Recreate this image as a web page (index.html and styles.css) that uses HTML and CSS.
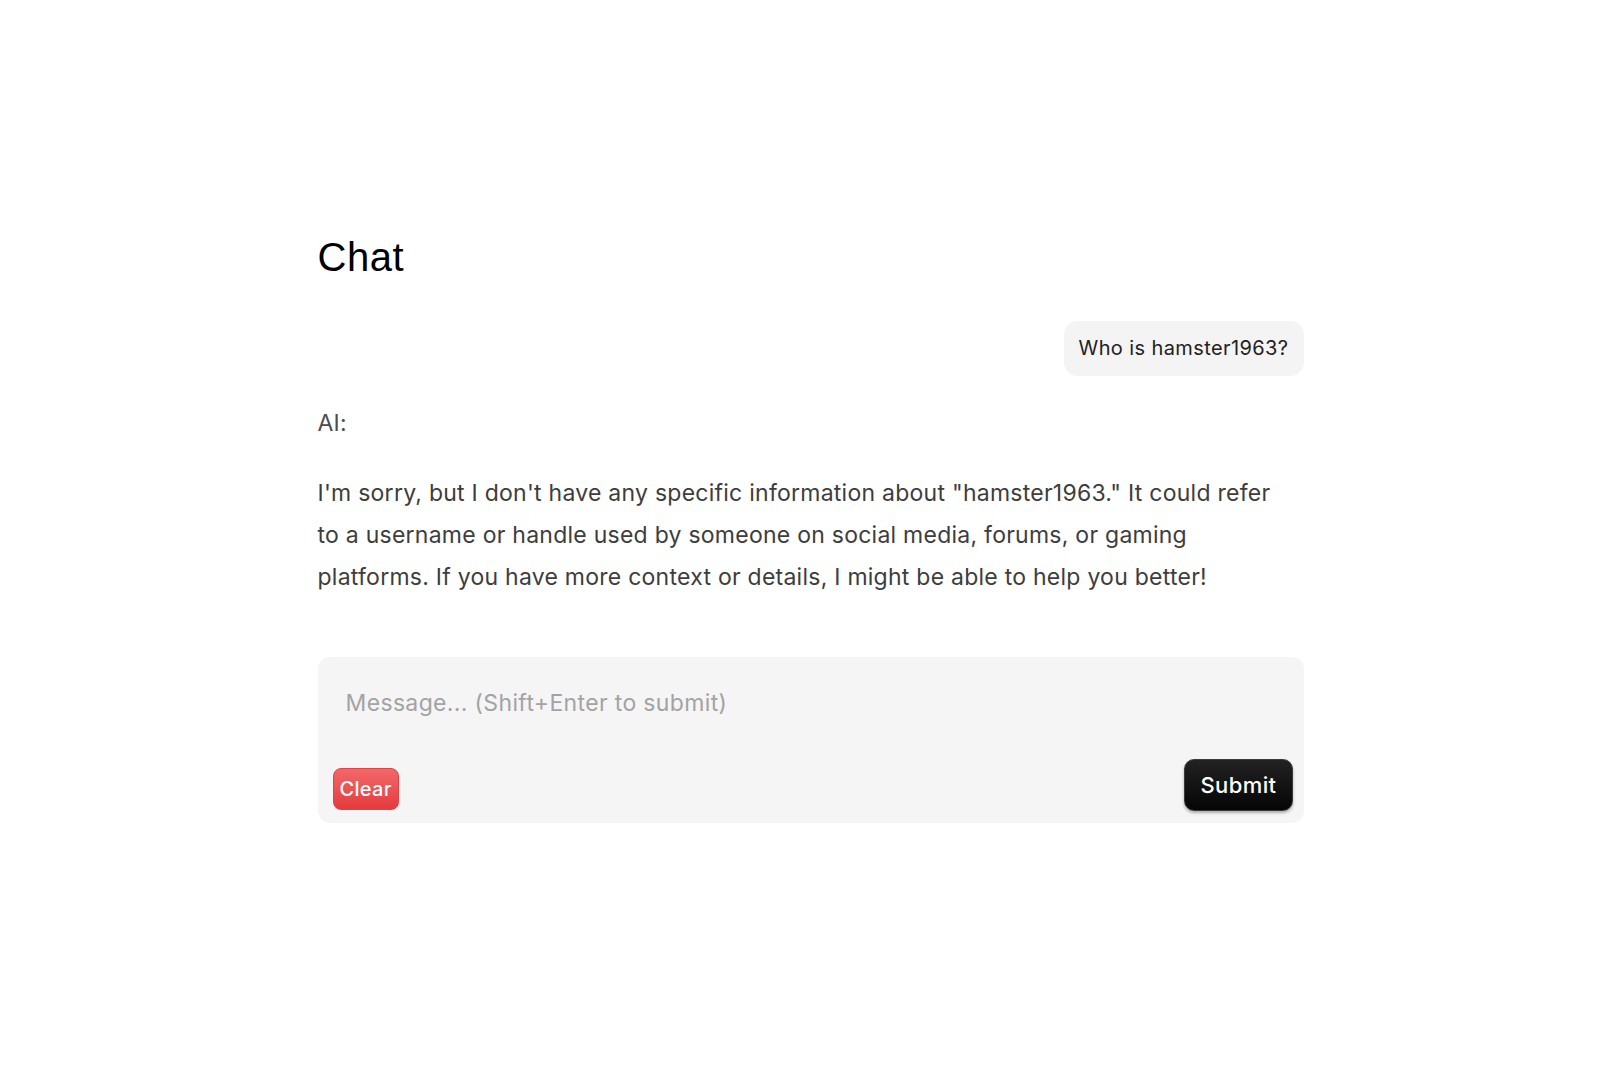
FILE: index.html
```html
<!DOCTYPE html>
<html lang="en">
<head>
    <meta charset="UTF-8">
    <meta name="viewport" content="width=device-width, initial-scale=1.0">
    <title>Chat</title>
    <link rel="stylesheet" href="styles.css">
</head>
<body>
    <main class="chat">
        <h1 class="chat-title">Chat</h1>

        <div class="messages">
            <div class="message message-user">
                <div class="bubble">Who is hamster1963?</div>
            </div>

            <div class="message message-ai">
                <p class="speaker">AI:</p>
                <p class="reply">I'm sorry, but I don't have any specific information about "hamster1963." It could refer to a username or handle used by someone on social media, forums, or gaming platforms. If you have more context or details, I might be able to help you better!</p>
            </div>
        </div>

        <form class="composer">
            <textarea class="composer-input" placeholder="Message... (Shift+Enter to submit)"></textarea>
            <div class="composer-actions">
                <button type="button" class="btn btn-clear">Clear</button>
                <button type="submit" class="btn btn-submit">Submit</button>
            </div>
        </form>
    </main>
</body>
</html>
```

FILE: styles.css
```css
* {
    margin: 0;
    padding: 0;
    box-sizing: border-box;
}

body {
    background-color: #fff;
    font-family: Inter, "Noto Sans", sans-serif;
    color: #3b3b3b;
}

.chat {
    width: 986px;
    margin: 0 auto;
    padding-top: 234px;
    position: relative;
    left: 1px;
}

.chat-title {
    font-family: "Liberation Sans", Arial, sans-serif;
    font-size: 40px;
    font-weight: 400;
    line-height: 46px;
    letter-spacing: 0.5px;
    color: #000;
    margin-bottom: 41px;
}

/* Messages */
.message-user {
    display: flex;
    justify-content: flex-end;
    margin-bottom: 26px;
}

.bubble {
    background-color: #f4f4f4;
    border-radius: 14px;
    padding: 14px 15px;
    font-size: 20px;
    line-height: 27px;
    letter-spacing: 0.4px;
    color: #222;
}

.speaker {
    font-size: 23px;
    line-height: 42px;
    letter-spacing: 0.25px;
    color: #4d4d4d;
    margin-bottom: 28px;
}

.reply {
    max-width: 965px;
    font-size: 23px;
    line-height: 42px;
    letter-spacing: 0.25px;
    color: #3d3d3d;
    margin-bottom: 59px;
}

/* Composer */
.composer {
    background-color: #f5f5f5;
    border-radius: 12px;
}

.composer-input {
    display: block;
    width: 100%;
    height: 102px;
    padding: 25px 28px 0;
    border: none;
    outline: none;
    resize: none;
    background: transparent;
    font-family: inherit;
    font-size: 23px;
    line-height: 42px;
    letter-spacing: 0.35px;
    color: #333;
}

.composer-input::placeholder {
    color: #a3a3a3;
}

.composer-actions {
    display: flex;
    justify-content: space-between;
    align-items: flex-end;
    padding: 0 11px 12px 15px;
}

.btn {
    font-family: inherit;
    font-weight: 500;
    color: #fff;
    cursor: pointer;
}

.btn-clear {
    height: 42px;
    padding: 0 6px;
    font-size: 20px;
    letter-spacing: 0.3px;
    border: 1px solid #e04345;
    border-radius: 8px;
    background: linear-gradient(#f2686a, #e53b3e);
    margin-bottom: 1px;
}

.btn-submit {
    height: 52px;
    padding: 0 15px;
    font-size: 22px;
    letter-spacing: 0.4px;
    border: 1px solid #3a3a3a;
    border-radius: 10px;
    background: linear-gradient(#222, #050505);
    box-shadow: 0 2px 3px rgba(0, 0, 0, 0.3);
}
```
